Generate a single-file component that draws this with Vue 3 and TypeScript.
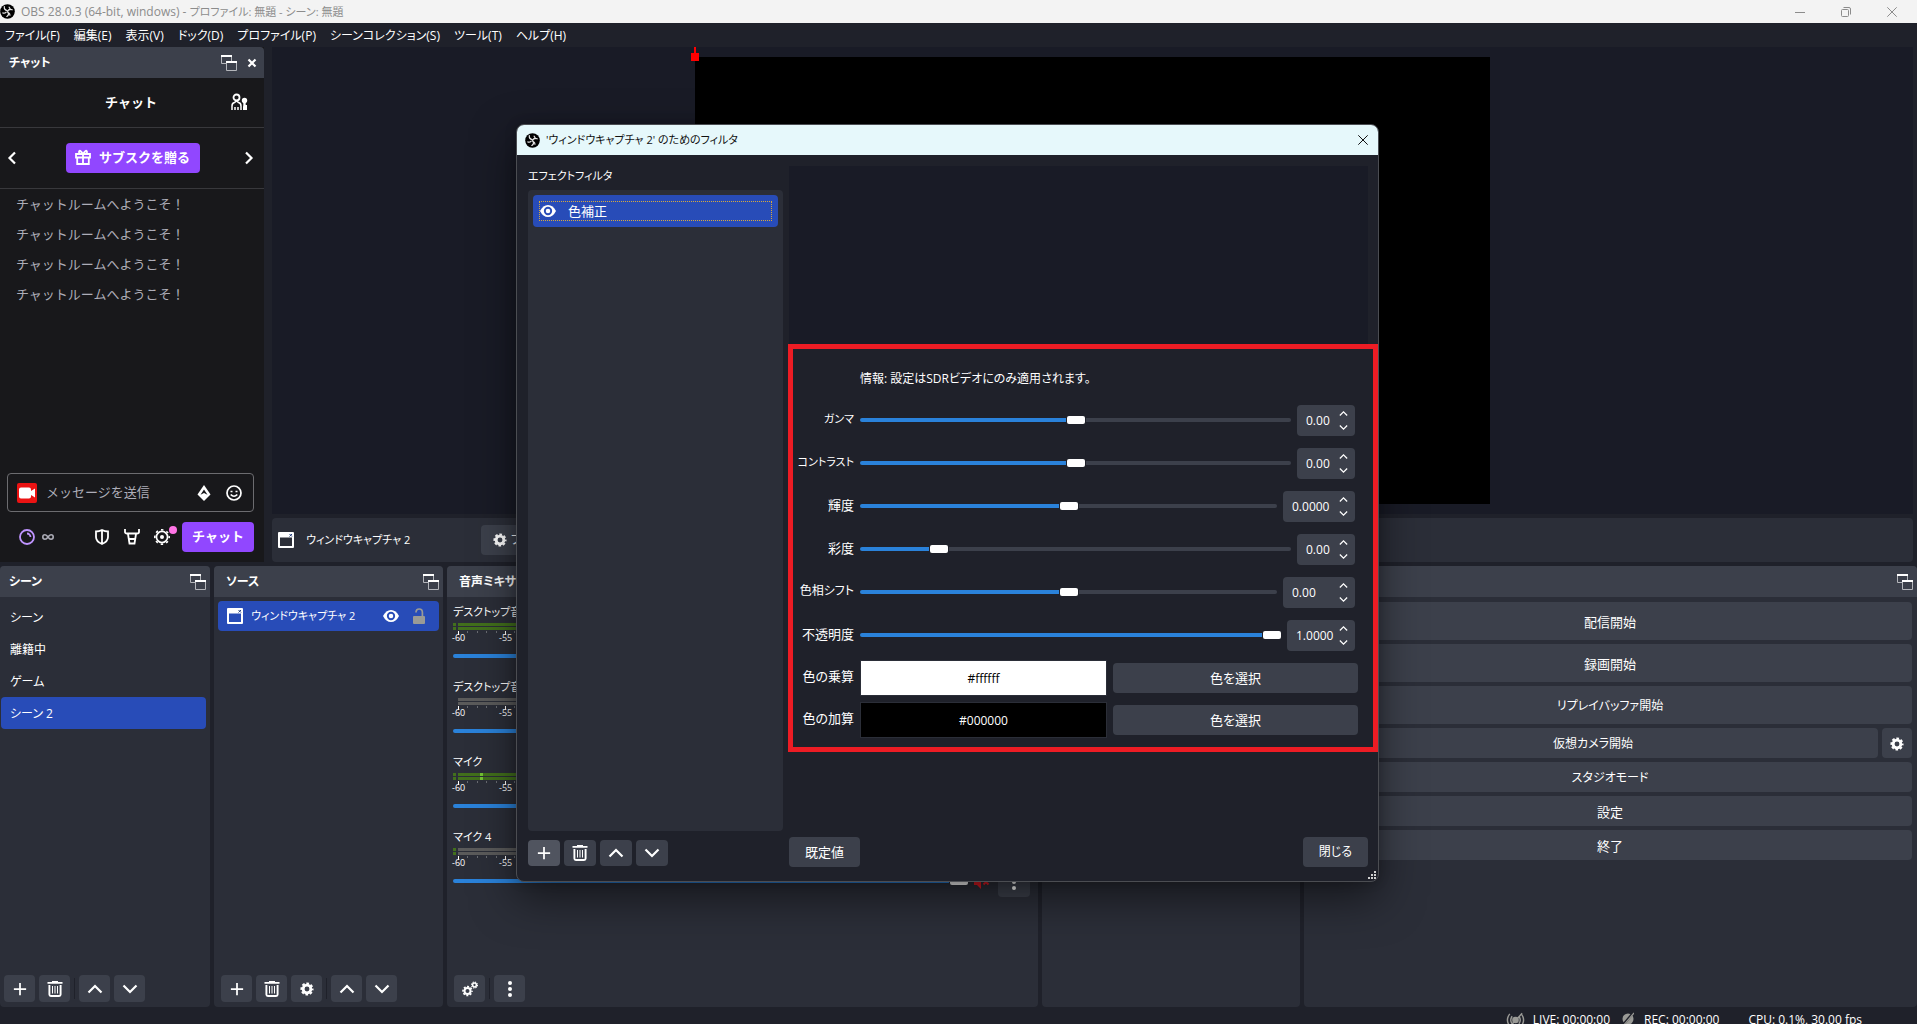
<script setup lang="ts">
import { ref } from 'vue'

interface Prop { label: string; value: string; pos: number; size: 's' | 'm' | 'l'; text: 't11' | 't12' | 't13' }
interface Channel { name: string; active: boolean; lead: boolean; peak: boolean; muted: boolean }

const menus = ['ファイル(F)', '編集(E)', '表示(V)', 'ドック(D)', 'プロファイル(P)', 'シーンコレクション(S)', 'ツール(T)', 'ヘルプ(H)']
const greetings = ['チャットルームへようこそ！', 'チャットルームへようこそ！', 'チャットルームへようこそ！', 'チャットルームへようこそ！']
const scenes = ['シーン', '離籍中', 'ゲーム', 'シーン 2']
const currentScene = ref(3)
const message = ref('')

const channels: Channel[] = [
  { name: 'デスクトップ音声', active: true, lead: true, peak: false, muted: false },
  { name: 'デスクトップ音声 2', active: false, lead: false, peak: false, muted: false },
  { name: 'マイク', active: true, lead: true, peak: true, muted: false },
  { name: 'マイク 4', active: false, lead: true, peak: false, muted: true },
]
const decibels = [-60, -55, -50, -45, -40, -35, -30, -25, -20, -15, -10, -5]
const lastLabel = -55

const filterProps = ref<Prop[]>([
  { label: 'ガンマ', value: '0.00', pos: 50, size: 's', text: 't11' },
  { label: 'コントラスト', value: '0.00', pos: 50, size: 's', text: 't11' },
  { label: '輝度', value: '0.0000', pos: 50, size: 'l', text: 't13' },
  { label: '彩度', value: '0.00', pos: 17, size: 's', text: 't13' },
  { label: '色相シフト', value: '0.00', pos: 50, size: 'l', text: 't12' },
  { label: '不透明度', value: '1.0000', pos: 100, size: 'm', text: 't13' },
])
const swatches = [
  { label: '色の乗算', value: '#ffffff', tone: 'light' },
  { label: '色の加算', value: '#000000', tone: 'dark' },
]
</script>

<template>
  <svg class="sprite" aria-hidden="true">
    <symbol id="i-obs" viewBox="0 0 16 16">
      <circle cx="8" cy="8" r="7.8" fill="#000" />
      <g fill="none" stroke="#e8e8e8" stroke-width="1.3" stroke-linecap="round">
        <path d="M4.6 2.9c-.3 2.3 1 3.7 3.2 4.2" />
        <path d="M13 6.2c-2-1.100-3.900-.5-4.700 1.700" />
        <path d="M7.300 13.300c2-1.100 2.400-3 .7-4.900" />
        <path d="M3 9.600c1.500.5 2.700.1 3.600-.9M9.700 3.300c.9.800 1.200 1.700.9 2.900M10.600 11.900c0-1-.5-1.900-1.500-2.500" />
      </g>
    </symbol>
    <symbol id="i-float" viewBox="0 0 16 16">
      <path d="M.5 2v6.500H5M10.500 2v4" fill="none" stroke="#b4b6bb" />
      <path d="M5.500 8v7.500h10V8" fill="none" stroke="#b4b6bb" />
      <path d="M0 0h11v2H0zM5 6h11v2H5z" fill="#fff" />
    </symbol>
    <symbol id="i-x" viewBox="0 0 10 10"><path d="M1.500 1.500l7 7M8.500 1.500l-7 7" stroke="currentColor" stroke-width="2.200" fill="none" /></symbol>
    <symbol id="i-thinx" viewBox="0 0 10 10"><path d="M.3.3l9.400 9.400M9.700.3L.3 9.700" stroke="currentColor" fill="none" /></symbol>
    <symbol id="i-min" viewBox="0 0 10 10"><path d="M0 5.500h10" stroke="currentColor" fill="none" /></symbol>
    <symbol id="i-restore" viewBox="0 0 10 10"><rect x=".5" y="2.500" width="7" height="7" rx="1" fill="none" stroke="currentColor" /><path d="M2.500.5H8Q9.500.5 9.500 2v5.500" fill="none" stroke="currentColor" /></symbol>
    <symbol id="i-mods" viewBox="0 0 18 18">
      <circle cx="6.500" cy="4.500" r="3" fill="none" stroke="currentColor" stroke-width="1.800" />
      <path d="M2 17v-4q0-3 2.500-3.500L6.500 8l2 1.500Q11 10 11 13v4M5 17v-3M8 17v-3" fill="none" stroke="currentColor" stroke-width="1.500" />
      <circle cx="14.500" cy="7.500" r="2.700" fill="currentColor" /><path d="M13.300 9h2.400v3H17v5h-4v-3l.3-2z" fill="currentColor" />
    </symbol>
    <symbol id="i-left" viewBox="0 0 10 14"><path d="M8 1.500L2.500 7 8 12.500" fill="none" stroke="currentColor" stroke-width="2.200" /></symbol>
    <symbol id="i-right" viewBox="0 0 10 14"><path d="M2 1.500L7.500 7 2 12.500" fill="none" stroke="currentColor" stroke-width="2.200" /></symbol>
    <symbol id="i-gift" viewBox="0 0 16 16">
      <path d="M1 5h14v3.500H1zM2.200 8.500h11.600V15H2.200zM8 5v10M8 5Q3.500 5 4 2.700 5 0 8 5q3-5 4-2.300Q12.500 5 8 5" fill="none" stroke="currentColor" stroke-width="1.800" />
    </symbol>
    <symbol id="i-cam" viewBox="0 0 20 20"><rect width="20" height="20" rx="2" fill="#eb1313" /><path d="M4 4.500h8q2 0 2 2V8l4-2.500v9L14 12v1.500q0 2-2 2H4q-2 0-2-2v-7q0-2 2-2z" fill="#fff" /></symbol>
    <symbol id="i-bits" viewBox="0 0 14 16"><path d="M7 0l6.500 9.500L7 16 .5 9.500z" fill="currentColor" /><path d="M7 4.500L3.500 9.800 7 8l3.500 1.800z" fill="#18181b" /></symbol>
    <symbol id="i-smile" viewBox="0 0 16 16"><circle cx="8" cy="8" r="7" fill="none" stroke="currentColor" stroke-width="1.700" /><path d="M4.500 6.500h2M9.500 6.500h2M4.700 9.500q3.300 3.500 6.600 0" fill="none" stroke="currentColor" stroke-width="1.700" /></symbol>
    <symbol id="i-points" viewBox="0 0 16 16"><circle cx="8" cy="8" r="7" fill="none" stroke="currentColor" stroke-width="1.800" /><path d="M8 4.500A3.500 3.500 0 0 1 11.500 8" fill="none" stroke="currentColor" stroke-width="1.800" /></symbol>
    <symbol id="i-infinity" viewBox="0 0 12 6"><path d="M6 3Q4.500.8 3 .8a2.200 2.200 0 0 0 0 4.400Q4.500 5.200 6 3 7.500.8 9 .8a2.200 2.200 0 0 1 0 4.400Q7.500 5.200 6 3" fill="none" stroke="currentColor" stroke-width="1.600" /></symbol>
    <symbol id="i-shield" viewBox="0 0 14 16"><path d="M1 2.500Q4 2.500 7 1q3 1.500 6 1.500V8q0 4.500-6 7Q1 12.500 1 8zM7 1v14" fill="none" stroke="currentColor" stroke-width="1.800" /></symbol>
    <symbol id="i-sword" viewBox="0 0 16 16"><path d="M1 0v3q0 1.500 2 1.500h10q2 0 2-1.500V0M4 5l1.500 9.500h5L12 5M5 10h6" fill="none" stroke="currentColor" stroke-width="1.800" /></symbol>
    <symbol id="i-cog" viewBox="0 0 16 16"><circle cx="8" cy="8" r="5.600" fill="none" stroke="currentColor" stroke-width="1.700" /><circle cx="8" cy="8" r="7.200" fill="none" stroke="currentColor" stroke-width="1.600" stroke-dasharray="2.400 3.255" stroke-dashoffset="1.200" /><circle cx="8" cy="8" r="2" fill="currentColor" /></symbol>
    <symbol id="i-gear" viewBox="0 0 16 16"><circle cx="8" cy="8" r="4.400" fill="none" stroke="currentColor" stroke-width="3.200" /><circle cx="8" cy="8" r="6.400" fill="none" stroke="currentColor" stroke-width="2.200" stroke-dasharray="3 2.027" stroke-dashoffset="1.500" /></symbol>
    <symbol id="i-gears" viewBox="0 0 16 16">
      <circle cx="5.500" cy="10" r="3" fill="none" stroke="currentColor" stroke-width="2" /><circle cx="5.500" cy="10" r="4.500" fill="none" stroke="currentColor" stroke-width="1.600" stroke-dasharray="2 1.534" stroke-dashoffset="1" />
      <circle cx="12.500" cy="4" r="1.900" fill="none" stroke="currentColor" stroke-width="1.500" /><circle cx="12.500" cy="4" r="3" fill="none" stroke="currentColor" stroke-width="1.100" stroke-dasharray="1.300 1.056" />
    </symbol>
    <symbol id="i-plus" viewBox="0 0 16 16"><path d="M8 1v14M1 8h14" stroke="currentColor" stroke-width="2" fill="none" /></symbol>
    <symbol id="i-trash" viewBox="0 0 16 16"><path d="M.5 1.800h15M5 .9h6" stroke="currentColor" stroke-width="1.800" /><path d="M2.400 4v9.500q0 1.500 1.500 1.500h8.200q1.500 0 1.500-1.500V4" fill="none" stroke="currentColor" stroke-width="1.900" /><path d="M5.500 5v7.500M8 5v7.500M10.500 5v7.500" stroke="currentColor" stroke-width="1" /></symbol>
    <symbol id="i-up" viewBox="0 0 16 16"><path d="M1.500 11.500L8 5l6.500 6.500" fill="none" stroke="currentColor" stroke-width="2.200" /></symbol>
    <symbol id="i-down" viewBox="0 0 16 16"><path d="M1.500 4.500L8 11l6.500-6.500" fill="none" stroke="currentColor" stroke-width="2.200" /></symbol>
    <symbol id="i-dots" viewBox="0 0 16 16"><circle cx="8" cy="2" r="2" fill="currentColor" /><circle cx="8" cy="8" r="2" fill="currentColor" /><circle cx="8" cy="14" r="2" fill="currentColor" /></symbol>
    <symbol id="i-window" viewBox="0 0 16 16"><path d="M1 1h14v14H1z" fill="none" stroke="currentColor" stroke-width="2" stroke-linejoin="round" /><path d="M1 1h14v4.500H1z" fill="currentColor" /><path d="M11.500 2l2.500 2.500M14 2l-2.500 2.500" stroke="#24407f" /></symbol>
    <symbol id="i-eye" viewBox="0 0 16 12"><path d="M0 6q3-6 8-6t8 6q-3 6-8 6T0 6z" fill="currentColor" /><circle cx="8" cy="6" r="3.200" fill="none" stroke="#284cb8" stroke-width="1.900" /></symbol>
    <symbol id="i-lock" viewBox="0 0 14 16"><rect x="1" y="8" width="12" height="8" rx="1" fill="currentColor" /><path d="M4 4.500Q4 1 7.200 1t3.200 3.500V9" fill="none" stroke="currentColor" stroke-width="1.700" /></symbol>
    <symbol id="i-mute" viewBox="0 0 16 16"><path d="M0 5h3l4-4v14l-4-4H0z" fill="currentColor" /><path d="M9.500 5.500l5 5M14.500 5.500l-5 5" fill="none" stroke="currentColor" stroke-width="2" /></symbol>
    <symbol id="i-live" viewBox="0 0 20 16"><path d="M4 1.500q-5 6.500 0 13M6.500 4q-3 4 0 8M16 1.500q5 6.500 0 13M13.500 4q3 4 0 8M3 16L17 1" fill="none" stroke="currentColor" stroke-width="1.500" /><circle cx="10" cy="8" r="3.500" fill="currentColor" /></symbol>
    <symbol id="i-rec" viewBox="0 0 12 14"><circle cx="6" cy="7" r="5.500" fill="currentColor" /><path d="M1 13L11 1" stroke="#1f212a" stroke-width="2.500" /><path d="M1 14L12 1" stroke="currentColor" stroke-width="1.200" /></symbol>
    <symbol id="i-grip" viewBox="0 0 8 8"><path d="M0 6h2v2H0zM3 6h2v2H3zM6 6h2v2H6zM3 3h2v2H3zM6 3h2v2H6zM6 0h2v2H6z" fill="#d0d0d0" /></symbol>
  </svg>

  <div class="app">
    <header class="titlebar">
      <svg class="ic15"><use href="#i-obs" /></svg>
      <span class="title-text">OBS 28.0.3 (64-bit, windows) - <span class="t11">プロファイル: 無題 - シーン: 無題</span></span>
      <div class="win-buttons">
        <button aria-label="最小化"><svg class="ic10"><use href="#i-min" /></svg></button>
        <button aria-label="元に戻す"><svg class="ic10"><use href="#i-restore" /></svg></button>
        <button aria-label="閉じる"><svg class="ic10"><use href="#i-thinx" /></svg></button>
      </div>
    </header>

    <nav class="menubar">
      <button v-for="m in menus" :key="m">{{ m }}</button>
    </nav>

    <div class="upper">
      <aside class="chat">
        <div class="dock-head">
          <span>チャット</span>
          <button aria-label="切り離す"><svg class="ic16"><use href="#i-float" /></svg></button>
          <button aria-label="閉じる"><svg class="ic10"><use href="#i-x" /></svg></button>
        </div>
        <div class="chat-title">
          <strong>チャット</strong>
          <button aria-label="ユーザー"><svg class="ic18"><use href="#i-mods" /></svg></button>
        </div>
        <div class="chat-gift">
          <button aria-label="前へ"><svg class="arrow"><use href="#i-left" /></svg></button>
          <button class="purple gift"><svg class="ic16"><use href="#i-gift" /></svg>サブスクを贈る</button>
          <button aria-label="次へ"><svg class="arrow"><use href="#i-right" /></svg></button>
        </div>
        <ul class="chat-log">
          <li v-for="(g, i) in greetings" :key="i">{{ g }}</li>
        </ul>
        <div class="chat-box">
          <svg class="ic20"><use href="#i-cam" /></svg>
          <input v-model="message" type="text" placeholder="メッセージを送信" aria-label="メッセージを送信">
          <button aria-label="ビッツ"><svg class="ic16"><use href="#i-bits" /></svg></button>
          <button aria-label="エモート"><svg class="ic16"><use href="#i-smile" /></svg></button>
        </div>
        <div class="chat-tools">
          <svg class="ic16 points"><use href="#i-points" /></svg>
          <svg class="infinity"><use href="#i-infinity" /></svg>
          <button aria-label="シールド"><svg class="ic16"><use href="#i-shield" /></svg></button>
          <button aria-label="モデレーション"><svg class="ic16"><use href="#i-sword" /></svg></button>
          <button class="cog" aria-label="チャット設定"><svg class="ic16"><use href="#i-cog" /></svg></button>
          <button class="purple send">チャット</button>
        </div>
      </aside>

      <main class="stage">
        <div class="preview"><div class="canvas"></div></div>
        <div class="context">
          <svg class="ic16"><use href="#i-window" /></svg>
          <span class="t11">ウィンドウキャプチャ 2</span>
          <button class="btn"><svg class="ic14"><use href="#i-gear" /></svg>プロパティ</button>
        </div>
      </main>
    </div>

    <div class="docks">
      <section class="dock">
        <div class="dock-head"><span>シーン</span><button aria-label="切り離す"><svg class="ic16"><use href="#i-float" /></svg></button></div>
        <ul class="scene-list">
          <li v-for="(s, i) in scenes" :key="s">
            <button :class="{ selected: i === currentScene }" @click="currentScene = i">{{ s }}</button>
          </li>
        </ul>
        <div class="tools">
          <button class="btn" aria-label="追加"><svg class="ic14"><use href="#i-plus" /></svg></button>
          <button class="btn" aria-label="削除"><svg class="ic16"><use href="#i-trash" /></svg></button>
          <i class="sep"></i>
          <button class="btn" aria-label="上へ"><svg class="ic16"><use href="#i-up" /></svg></button>
          <button class="btn" aria-label="下へ"><svg class="ic16"><use href="#i-down" /></svg></button>
        </div>
      </section>

      <section class="dock">
        <div class="dock-head wide"><span>ソース</span><button aria-label="切り離す"><svg class="ic16"><use href="#i-float" /></svg></button></div>
        <div class="source">
          <svg class="ic16"><use href="#i-window" /></svg>
          <span class="t11">ウィンドウキャプチャ 2</span>
          <button aria-label="表示"><svg class="eye"><use href="#i-eye" /></svg></button>
          <button class="lock" aria-label="ロック"><svg class="ic16"><use href="#i-lock" /></svg></button>
        </div>
        <div class="tools inset">
          <button class="btn" aria-label="追加"><svg class="ic14"><use href="#i-plus" /></svg></button>
          <button class="btn" aria-label="削除"><svg class="ic16"><use href="#i-trash" /></svg></button>
          <button class="btn" aria-label="設定"><svg class="ic14"><use href="#i-gear" /></svg></button>
          <i class="sep"></i>
          <button class="btn" aria-label="上へ"><svg class="ic16"><use href="#i-up" /></svg></button>
          <button class="btn" aria-label="下へ"><svg class="ic16"><use href="#i-down" /></svg></button>
        </div>
      </section>

      <section class="dock">
        <div class="dock-head wide"><span>音声ミキサー</span></div>
        <div class="mixer">
          <div v-for="c in channels" :key="c.name" class="channel">
            <span class="ch-name t11">{{ c.name }}</span>
            <div v-for="n in 2" :key="n" class="meter" :class="{ on: c.active }">
              <i class="lead" :class="{ lit: c.lead }"></i><i class="bar"><b v-if="c.peak"></b></i>
            </div>
            <div class="scale">
              <div v-for="d in decibels" :key="d" class="seg">
                <i></i><i></i><i></i><i></i><i></i><span v-if="d <= lastLabel">{{ d }}</span>
              </div>
            </div>
            <div class="fader">
              <input type="range" min="0" max="100" value="100" :style="{ '--p': '100%' }" :aria-label="c.name">
              <svg class="ic16" :class="{ muted: c.muted }"><use href="#i-mute" /></svg>
              <button class="btn" aria-label="メニュー"><svg class="ic16"><use href="#i-dots" /></svg></button>
            </div>
          </div>
        </div>
        <div class="tools inset">
          <button class="btn" aria-label="詳細設定"><svg class="ic16"><use href="#i-gears" /></svg></button>
          <i class="sep"></i>
          <button class="btn" aria-label="メニュー"><svg class="ic16"><use href="#i-dots" /></svg></button>
        </div>
      </section>

      <section class="dock"><div class="dock-head"></div></section>

      <section class="dock">
        <div class="dock-head"><span></span><button aria-label="切り離す"><svg class="ic16"><use href="#i-float" /></svg></button></div>
        <div class="controls">
          <button class="btn tall t13">配信開始</button>
          <button class="btn tall t13">録画開始</button>
          <button class="btn tall">リプレイバッファ開始</button>
          <div class="pair">
            <button class="btn">仮想カメラ開始</button>
            <button class="btn gear" aria-label="仮想カメラ設定"><svg class="ic14"><use href="#i-gear" /></svg></button>
          </div>
          <button class="btn">スタジオモード</button>
          <button class="btn t13">設定</button>
          <button class="btn t13">終了</button>
        </div>
      </section>
    </div>

    <footer class="status">
      <svg class="live"><use href="#i-live" /></svg><span class="s-live">LIVE: 00:00:00</span>
      <svg class="rec"><use href="#i-rec" /></svg><span class="s-rec">REC: 00:00:00</span>
      <span>CPU: 0.1%, 30.00 fps</span>
    </footer>

    <div class="dialog" role="dialog" aria-labelledby="dlg-title">
      <div class="dlg-head">
        <svg class="ic15"><use href="#i-obs" /></svg>
        <span id="dlg-title" class="t11">'ウィンドウキャプチャ 2' のためのフィルタ</span>
        <button aria-label="閉じる"><svg class="ic10"><use href="#i-thinx" /></svg></button>
      </div>
      <div class="dlg-body">
        <div class="filters">
          <span class="f-label t11">エフェクトフィルタ</span>
          <div class="f-list">
            <button class="f-item t13"><span><svg class="eye"><use href="#i-eye" /></svg>色補正</span></button>
          </div>
          <div class="f-tools">
            <button class="btn hover" aria-label="追加"><svg class="ic14"><use href="#i-plus" /></svg></button>
            <button class="btn" aria-label="削除"><svg class="ic16"><use href="#i-trash" /></svg></button>
            <button class="btn" aria-label="上へ"><svg class="ic16"><use href="#i-up" /></svg></button>
            <button class="btn" aria-label="下へ"><svg class="ic16"><use href="#i-down" /></svg></button>
          </div>
        </div>
        <div class="settings">
          <div class="f-preview"></div>
          <form class="form" @submit.prevent>
            <p class="info">情報: 設定はSDRビデオにのみ適用されます。</p>
            <div v-for="(p, i) in filterProps" :key="p.label" class="row">
              <label :for="'prop-' + i" :class="p.text">{{ p.label }}</label>
              <input :id="'prop-' + i" v-model.number="p.pos" type="range" min="0" max="100" :style="{ '--p': p.pos + '%' }">
              <div class="spin" :class="p.size">
                <input v-model="p.value" type="text" :aria-label="p.label">
                <div>
                  <button type="button" aria-label="増やす"><svg class="ic9"><use href="#i-up" /></svg></button>
                  <button type="button" aria-label="減らす"><svg class="ic9"><use href="#i-down" /></svg></button>
                </div>
              </div>
            </div>
            <div class="colors">
              <div v-for="s in swatches" :key="s.label" class="color-row">
                <span class="c-label t13">{{ s.label }}</span>
                <output class="swatch" :class="s.tone">{{ s.value }}</output>
                <button type="button" class="btn t13">色を選択</button>
              </div>
            </div>
          </form>
          <div class="dlg-foot">
            <button class="btn t13">既定値</button>
            <button class="btn">閉じる</button>
          </div>
        </div>
      </div>
      <div class="highlight"></div>
      <svg class="grip"><use href="#i-grip" /></svg>
    </div>
  </div>
</template>

<style>
body { margin: 0; background: #1f212a; overflow: hidden; }
</style>

<style scoped>
* { box-sizing: border-box; }
.sprite { position: absolute; width: 0; height: 0; }
.app {
  position: relative; display: flex; flex-direction: column; height: 100vh; overflow: hidden;
  background: #1f212a; color: #fff;
  font: 12px/16px "Open Sans", "Noto Sans CJK JP", sans-serif;
  font-feature-settings: "palt";
}
button { padding: 0; border: 0; background: none; color: inherit; font: inherit; font-feature-settings: inherit; display: flex; align-items: center; justify-content: center; }
input { font: inherit; font-feature-settings: inherit; color: inherit; }
ul { list-style: none; margin: 0; padding: 0; }
svg { display: block; flex: none; }
.t11 { font-size: 11px; }
.t12 { font-size: 12px; }
.t13 { font-size: 13px; }
.ic9 { width: 9px; height: 9px; }
.ic10 { width: 10px; height: 10px; }
.ic14 { width: 14px; height: 14px; }
.ic15 { width: 15px; height: 15px; }
.ic16 { width: 16px; height: 16px; }
.ic18 { width: 18px; height: 18px; }
.ic20 { width: 20px; height: 20px; }
.eye { width: 16px; height: 12px; }
.btn { height: 30px; border-radius: 4px; background: #3c404b; }

.titlebar { flex: none; display: flex; align-items: center; height: 23px; padding-right: 2px; background: #f3f3f3; color: #8c8c8c; }
.title-text { margin-left: 6px; flex: 1; }
.win-buttons { display: flex; }
.win-buttons button { width: 46px; height: 20px; }
.menubar { flex: none; display: flex; align-items: center; height: 24px; padding: 2px 0 0 5px; gap: 14px; }

.upper { flex: 1; min-height: 0; display: flex; gap: 8px; padding-right: 4px; }
.chat { flex: none; width: 264px; display: flex; flex-direction: column; background: #18181b; font-size: 13px; font-feature-settings: normal; }
.dock-head { flex: none; display: flex; align-items: center; gap: 10px; height: 31px; padding: 1px 4px 0 9px; border-radius: 4px 4px 0 0; background: #3c404b; font-weight: 600; font-size: 12px; font-feature-settings: "palt"; }
.chat .dock-head { border-radius: 0 4px 0 0; padding-right: 7px; }
.dock-head.wide { padding-left: 12px; }
.dock-head span { flex: 1; white-space: nowrap; overflow: hidden; }
.chat-title { display: flex; align-items: center; height: 50px; padding: 0 16px 2px 32px; border-bottom: 1px solid #38383c; }
.chat-title strong { flex: 1; text-align: center; font-weight: 600; }
.chat-gift { display: flex; align-items: center; justify-content: space-between; height: 61px; padding: 0 10px 0 7px; border-bottom: 1px solid #38383c; }
.arrow { width: 10px; height: 14px; }
.purple { height: 30px; border-radius: 4px; background: #9147ff; font-weight: 700; }
.gift { gap: 8px; width: 134px; margin-left: 4px; padding-bottom: 2px; }
.chat-log { flex: 1; padding: 0 16px; color: #adadb8; }
.chat-log li { height: 30px; line-height: 30px; }
.chat-box { display: flex; align-items: center; height: 39px; margin: 0 10px 0 7px; padding: 0 11px 0 9px; border: 1px solid #6c6c70; border-radius: 4px; }
.chat-box input { flex: 1; min-width: 0; margin-left: 9px; padding: 0 0 2px; border: 0; background: none; outline: 0; }
.chat-box input::placeholder { color: #adadb8; opacity: 1; }
.chat-box button + button { margin-left: 14px; }
.chat-tools { display: flex; align-items: center; height: 50px; padding: 0 10px 0 19px; }
.points { color: #bf94ff; }
.infinity { width: 12px; height: 6px; margin: 0 auto 0 7px; color: #adadb8; }
.chat-tools button { margin-right: 14px; }
.chat-tools .cog { position: relative; margin-right: 12px; }
.cog::after { content: ""; position: absolute; left: 15px; top: -3px; width: 8px; height: 8px; border-radius: 4px; background: #ff75e6; }
.chat-tools .send { width: 72px; margin: 0; padding-bottom: 2px; }

.stage { flex: 1; min-width: 0; display: flex; flex-direction: column; gap: 4px; }
.preview { flex: 1; min-height: 0; display: flex; justify-content: center; padding: 10px 0; background: #191b26; }
.canvas { position: relative; height: 100%; aspect-ratio: 16 / 9; background: #000; }
.canvas::before { content: ""; position: absolute; left: -4px; top: -4px; width: 8px; height: 8px; background: #f00; }
.canvas::after { content: ""; position: absolute; left: -1px; top: -10px; width: 2px; height: 6px; background: #f00; }
.context { flex: none; display: flex; align-items: center; height: 44px; padding-left: 6px; border-radius: 4px; background: #2b2e38; }
.context span { width: 175px; margin-left: 12px; white-space: nowrap; }
.context .btn { gap: 4px; padding: 0 12px; }

.docks { flex: none; display: grid; grid-template-columns: 210px 229px 591fr 258fr 613fr; gap: 4px; height: 441px; margin-top: 4px; }
.dock { display: flex; flex-direction: column; min-width: 0; border-radius: 4px; background: #2b2e38; }
.scene-list { flex: 1; padding: 4px 4px 0 1px; }
.scene-list button { width: 100%; height: 32px; justify-content: flex-start; padding: 2px 0 0 9px; border-radius: 4px; }
.scene-list .selected { background: #284cb8; }
.tools { display: flex; align-items: center; gap: 4px; height: 27px; margin: auto 0 5px 4px; }
.tools.inset { margin-left: 7px; }
.tools .btn { width: 31px; height: 27px; }
.sep { width: 1px; height: 21px; background: #1f212a; }
.source { display: flex; align-items: center; height: 30px; margin: 4px 4px 0; padding: 0 12px 0 9px; border-radius: 4px; background: #284cb8; }
.source span { flex: 1; margin-left: 8px; white-space: nowrap; }
.source .lock { margin-left: 12px; color: #9a9a96; }

.mixer { padding: 6px 8px 0 6px; }
.channel { display: flex; flex-direction: column; height: 75px; }
.ch-name { height: 20px; line-height: 18px; white-space: nowrap; }
.meter { display: flex; gap: 2px; height: 3px; margin-bottom: 1px; }
.lead { width: 3px; }
.lead.lit { background: #42701c; }
.bar { flex: 1; background: #5b5b5b; }
.meter.on .bar { background: #42701c; }
.bar b { display: block; width: 3px; height: 3px; margin-left: 22px; background: #72c232; }
.scale { flex: none; display: flex; height: 11px; padding: 0 8px 0 5px; }
.seg { flex: 1; display: grid; grid-template-columns: repeat(5, 1fr); align-content: start; }
.seg i { height: 2px; border-left: 1px solid #6a6c72; }
.seg i:first-child { height: 4px; border-color: #fff; }
.seg span { grid-column: 1 / -1; margin: -2px 0 0 -6px; font-size: 9px; line-height: 10px; }
.fader { flex: none; display: flex; align-items: center; height: 29px; }
.fader input { flex: 1; --back: #2b2e38; }
.fader svg { margin-left: 6px; }
.fader .btn { width: 32px; margin-left: 8px; height: 30px; }
.fader .btn svg { margin: 0; }
.muted { color: #e01b24; }

input[type="range"] { -webkit-appearance: none; appearance: none; min-width: 0; height: 8px; margin: 0 0 1px; background: none; }
input[type="range"]::-webkit-slider-runnable-track { height: 4px; border-radius: 2px; background: linear-gradient(to right, #2a82da var(--p), #3c404b var(--p)); }
input[type="range"]::-webkit-slider-thumb { -webkit-appearance: none; width: 18px; height: 8px; margin-top: -2px; border-radius: 2px; background: #fff; box-shadow: 0 0 0 1px var(--back); }

.controls { display: flex; flex-direction: column; gap: 4px; padding: 5px 5px 0 4px; }
.controls .btn { padding-top: 2px; }
.controls .tall { height: 38px; }
.pair { display: flex; gap: 4px; }
.pair .btn { flex: 1; }
.pair .gear { flex: none; width: 30px; }

.status { flex: none; display: flex; align-items: flex-start; justify-content: flex-end; height: 17px; padding: 5px 55px 0 0; }
.live { width: 19px; height: 16px; margin-right: 8px; color: #9a9a96; }
.rec { width: 12px; height: 14px; margin-right: 10px; color: #9a9a96; }
.s-live { margin-right: 12px; }
.s-rec { margin-right: 29px; }

.dialog { position: absolute; left: 516px; top: 124px; width: 863px; display: flex; flex-direction: column; border: 1px solid #4b4d52; border-radius: 8px; background: #1f212a; box-shadow: 0 16px 44px rgba(0, 0, 0, .5), 0 0 12px rgba(0, 0, 0, .2); }
.dlg-head { display: flex; align-items: center; height: 30px; padding: 0 10px 0 8px; border-radius: 7px 7px 0 0; background: #e6f8fb; color: #111; }
.dlg-head span { flex: 1; margin-left: 6px; }
.dlg-body { display: flex; gap: 6px; padding: 11px 10px 14px 11px; }
.filters { flex: none; width: 255px; display: flex; flex-direction: column; }
.f-label { height: 24px; line-height: 20px; }
.f-list { flex: 1; padding: 5px; border-radius: 4px; background: #2b2e38; }
.f-item { width: 100%; height: 32px; padding: 0 6px; border-radius: 4px; background: #284cb8; }
.f-item span { flex: 1; display: flex; align-items: center; gap: 12px; height: 20px; border: 1px dotted #d8a93c; }
.f-tools { display: flex; gap: 4px; margin: 9px 0 1px; }
.f-tools .btn { width: 32px; height: 26px; }
.f-tools .hover { background: #50545f; }
.settings { flex: 1; min-width: 0; display: flex; flex-direction: column; }
.f-preview { height: 181px; background: #191b26; }
.form { padding: 21px 10px 0 0; --back: #1f212a; }
.info { height: 20px; margin: 0 0 17px 71px; line-height: 22px; }
.row { display: flex; align-items: center; gap: 6px; height: 31px; margin-bottom: 12px; padding-right: 3px; }
.row label, .c-label { width: 65px; padding-bottom: 4px; text-align: right; white-space: nowrap; }
.row > input { flex: 1; }
.spin { display: flex; align-items: center; height: 31px; padding: 0 7px 0 9px; border-radius: 4px; background: #3c404b; }
.spin > input { flex: 1; width: 0; min-width: 0; padding: 0; border: 0; background: none; outline: 0; }
.spin button { height: 14px; }
.spin.s { width: 58px; }
.spin.m { width: 68px; }
.spin.l { width: 72px; }
.colors { display: flex; flex-direction: column; gap: 6px; margin-top: -3px; }
.color-row { display: flex; align-items: center; gap: 6px; height: 36px; }
.swatch { flex: 1; height: 36px; border: 1px solid #2b2e38; line-height: 36px; text-align: center; }
.swatch.light { background: #fff; color: #000; }
.swatch.dark { background: #000; color: #fff; }
.color-row .btn { flex: 1; }
.dlg-foot { display: flex; justify-content: space-between; margin-top: 99px; }
.dlg-foot .btn { padding: 0 16px; }
.highlight { position: absolute; left: 271px; top: 219px; width: 590px; height: 408px; border: 5px solid #ed1c24; pointer-events: none; }
.grip { position: absolute; right: 2px; bottom: 2px; width: 8px; height: 8px; }
</style>
